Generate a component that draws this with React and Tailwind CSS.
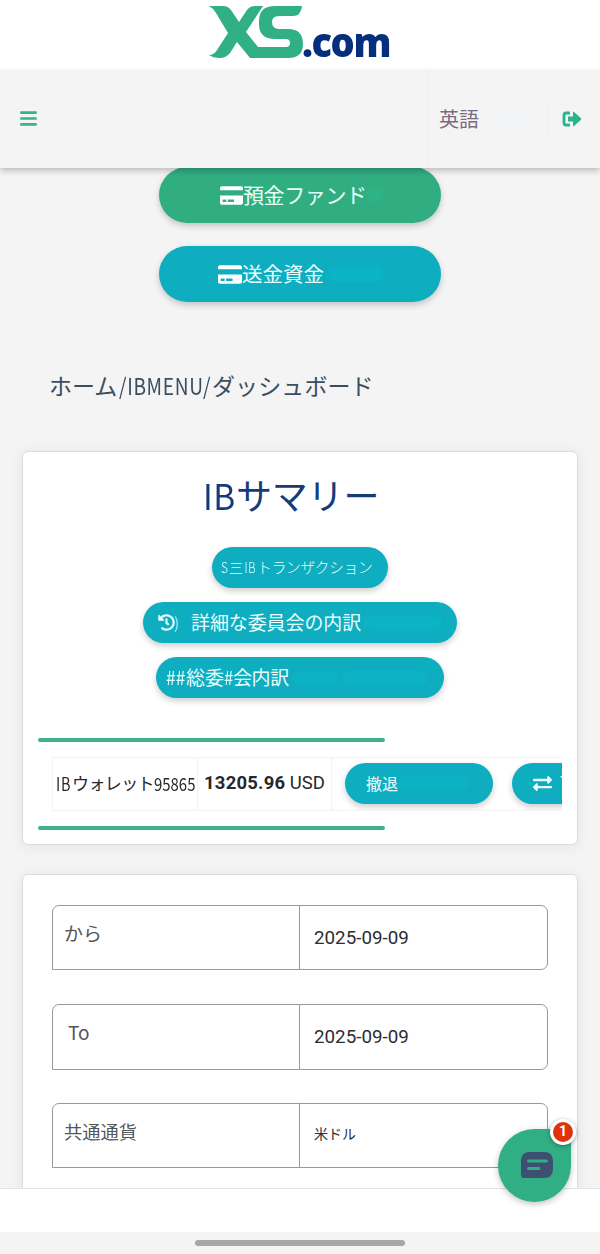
import React from "react";
import { FaBars, FaCreditCard, FaHistory, FaExchangeAlt } from "react-icons/fa";

const fields = [
  { label: "から", value: "2025-09-09", labelClass: "ml-[11px] -mt-[8px] text-[19px]", valueClass: "text-[18.800px] mt-[1px]", gap: "mb-[34px] h-[65px]" },
  { label: "To", value: "2025-09-09", labelClass: "ml-[15px] -mt-[10px] text-[19px]", valueClass: "text-[18.800px] mt-[1px]", gap: "mb-[33px] h-[66px]" },
  { label: "共通通貨", value: "米ドル", labelClass: "ml-[11px] -mt-[8px] text-[18.300px]", valueClass: "text-[14px] -mt-[3px]", gap: "h-[65px]" },
];

function Logo() {
  return (
    <div className="flex h-[70px] shrink-0 items-start justify-center bg-white">
      <div className="relative mt-[5px] h-[60px] w-[182px]">
        <svg className="h-[54px] w-[96px]" viewBox="0 0 96 54" fill="#30b084" aria-label="XS">
          <path d="M0 1H14Q19 1 22 5L30 17L38 5Q41 1 46 1H54L37 27L49 42H77Q81 42 81 38Q81 34 77 34H66Q50 34 50 19V16Q50 1 66 1H93Q92 11 84 11H70Q63 11 63 17Q63 24 70 24H79Q94 24 94 39Q94 53 79 53H41L28 37L21 48Q17 53 11 53Q4 53 0 50Q5 50 8 45L19 28L7 8Q4 3 0 1Z" />
        </svg>
        <span className="absolute left-[93px] top-[10px] origin-left scale-x-[0.95] whitespace-nowrap font-['Open_Sans',sans-serif] text-[40px] font-extrabold leading-[54px] tracking-[-1.500px] text-[#052f7c]">
          .com
        </span>
      </div>
    </div>
  );
}

function Navbar() {
  return (
    <header className="relative z-10 h-[98px] shrink-0 bg-[#f4f4f4] shadow-[0_3px_6px_rgba(0,0,0,0.22)]">
      <div className="flex h-full items-center pb-[1px]">
        <FaBars className="ml-[20px] h-[19px] w-[17px] text-[#35b58c]" />
        <div className="ml-auto flex h-full w-[173px] items-center border-l border-[#efefef]">
          <span className="ml-[11px] text-[20px] font-normal text-[#7c6a7e]">英語</span>
          <span className="ml-[14px] h-[14px] w-[38px] rounded bg-[#f1f5f8] blur-[2px]" />
          <span className="ml-[16px] h-[30px] w-px bg-[#efefef]" />
          <svg className="ml-[14px] h-[16px] w-[20px]" viewBox="0 0 20 16" fill="none">
            <path d="M8 2H4Q2 2 2 4V12Q2 14 4 14H8" stroke="#2ab48a" strokeWidth="2.800" />
            <path d="M6 5.500H11V1.500Q11 .4 12 1L19 7.300Q19.600 8 19 8.700L12 15Q11 15.600 11 14.500V10.500H6Z" fill="#2ab48a" />
          </svg>
        </div>
      </div>
    </header>
  );
}

function PillButton({ className, children }) {
  return (
    <button
      className={`relative flex shrink-0 items-center whitespace-nowrap rounded-full bg-[#0eadc0] text-[#e9ffff] shadow-[0_3px_6px_rgba(0,0,0,0.2)] ${className}`}
    >
      {children}
    </button>
  );
}

function Summary() {
  return (
    <section className="mx-[22px] mt-[50px] h-[394px] shrink-0 rounded-[6px] border border-[#d5dce2] bg-white shadow-[0_2px_14px_rgba(0,0,0,0.07)]">
      <h1 className="flex h-[95px] items-center pb-[12px] pl-[180px] leading-none text-[#163c78]">
        <span className="block w-[33px] origin-left scale-x-[0.93] whitespace-nowrap text-[36px] tracking-[0.500px]">IB</span>
        <span className="block text-[36px] tracking-[-0.200px]">サマリー</span>
      </h1>

      <div className="flex flex-col items-center gap-[14px]">
        <PillButton className="h-[41px] w-[176px] pl-[9px] font-light">
          <span className="block w-[8px] origin-left scale-x-[0.8] text-[15px]">S</span>
          <span className="text-[14px]">三</span>
          <span className="block w-[14px] origin-left scale-x-[0.75] pl-[2px] text-[15px] tracking-[1px]">IB</span>
          <span className="text-[15px] tracking-[-0.600px]">トランザクション</span>
        </PillButton>
        <PillButton className="h-[41px] w-[314px] pl-[15px]">
          <FaHistory className="h-[17px] w-[17px]" />
          <span className="-ml-[1px] -mt-[2px] w-[17px] text-left text-[16px] font-light leading-none">)</span>
          <span className="text-[19px] tracking-[-0.100px]">詳細な委員会の内訳</span>
          <span className="ml-[2px] h-[13px] w-[78px] rounded bg-[#0ab8c9] opacity-70 blur-[2px]" />
        </PillButton>
        <PillButton className="h-[41px] w-[288px] pl-[10px]">
          <span className="block w-[20px] origin-left scale-x-[0.92] text-[19px]">##</span>
          <span className="text-[19px]">総委</span>
          <span className="block w-[9px] origin-left scale-x-[0.88] text-[19px]">#</span>
          <span className="text-[19px] tracking-[-0.400px]">会内訳</span>
          <span className="ml-[3px] h-[12px] w-[46px] rounded bg-[#0ab8c9] opacity-60 blur-[2px]" />
          <span className="ml-[5px] h-[13px] w-[84px] rounded bg-[#0ab8c9] opacity-60 blur-[2px]" />
        </PillButton>
      </div>

      <div className="ml-[15px] mt-[40px] h-[4px] w-[347px] rounded-full bg-[#3eb18c]" />
      <div className="ml-[29px] mr-[15px] mt-[15px] flex h-[54px] items-center overflow-hidden border-y border-l border-[#f4f2f3] text-[#25282c]">
        <div className="flex h-full w-[145px] shrink-0 items-center whitespace-nowrap border-r border-[#f2f2f2] pb-[2px] pl-[3px]">
          <span className="block w-[16px] shrink-0 origin-left scale-x-[0.8] text-[18px] tracking-[1px]">IB</span>
          <span className="w-[82px] shrink-0 text-[17px] tracking-[-0.600px]">ウォレット</span>
          <span className="block w-[42px] shrink-0 origin-left scale-x-[0.83] text-[18px]">95865</span>
        </div>
        <div className="flex h-full w-[134px] shrink-0 items-center whitespace-pre border-r border-[#f2f2f2] pl-[6px] font-[Roboto,sans-serif] text-[18.500px]">
          <b className="tracking-[0.200px]">13205.96</b> USD
        </div>
        <PillButton className="-mt-[2px] ml-[13px] h-[41px] w-[148px] pl-[21px]">
          <span className="text-[16px]">撤退</span>
          <span className="ml-[3px] h-[14px] w-[68px] rounded bg-[#0ab8c9] opacity-50 blur-[2px]" />
        </PillButton>
        <PillButton className="-mt-[2px] ml-[19px] h-[41px] w-[130px] pl-[21px] font-[Roboto,sans-serif] text-[17px]">
          <FaExchangeAlt className="mr-[8px] h-[19px] w-[19px]" />
          Transfer
        </PillButton>
      </div>
      <div className="ml-[15px] mt-[15px] h-[4px] w-[347px] rounded-full bg-[#3eb18c]" />
    </section>
  );
}

function Filters() {
  return (
    <section className="mx-[22px] mt-[29px] h-[420px] shrink-0 rounded-[6px] border border-[#d5dce2] bg-white px-[29px] pt-[30px] shadow-[0_2px_14px_rgba(0,0,0,0.07)]">
      {fields.map((f) => (
        <div key={f.label} className={`flex ${f.gap}`}>
          <div className="flex w-[248px] items-center rounded-tl-[7px] border border-[#999] text-[#53565a]">
            <span className={f.labelClass}>{f.label}</span>
          </div>
          <div className="-ml-px flex flex-1 items-center rounded-r-[7px] border border-[#999] pl-[14px] font-[Roboto,'Noto_Sans_CJK_JP',sans-serif] text-[#2b2d30]">
            <span className={f.valueClass}>{f.value}</span>
          </div>
        </div>
      ))}
    </section>
  );
}

function ChatBubble() {
  return (
    <button className="absolute left-[498px] top-[1129px] z-20 flex h-[73px] w-[73px] items-center justify-center rounded-full rounded-tr-none bg-[#30ae84] shadow-[0_2px_6px_rgba(0,0,0,0.25)]">
      <svg className="ml-[4px] -mt-[1px] h-[26px] w-[32px]" viewBox="0 0 32 26">
        <path d="M9 0H23Q32 0 32 9V17Q32 26 23 26H3Q0 26 0 23V9Q0 0 9 0Z" fill="#3d5070" />
        <path d="M7.500 9H25.500M7.500 16.500H18" stroke="#30ae84" strokeWidth="3" strokeLinecap="round" />
      </svg>
      <span className="absolute -right-[5px] -top-[10px] flex h-[26px] w-[26px] items-center justify-center rounded-full border-[3px] border-white bg-[#de330c] pb-[3px] font-[Roboto,sans-serif] text-[14px] font-bold leading-none text-white shadow-[0_1px_4px_rgba(0,0,0,0.35)]">
        1
      </span>
    </button>
  );
}

export default function App() {
  return (
    <div className="relative flex h-[1254px] w-[600px] flex-col overflow-hidden bg-[#f4f4f4] font-['Noto_Sans_CJK_JP',sans-serif]">
      <Logo />
      <Navbar />

      <main className="flex h-[1020px] shrink-0 flex-col overflow-hidden">
        <button className="mx-auto -mt-px flex h-[56px] w-[282px] shrink-0 items-center rounded-full bg-[#30ae82] pl-[61px] text-[#e9fff6] shadow-[0_3px_6px_rgba(0,0,0,0.2)]">
          <FaCreditCard className="h-[21px] w-[23px] shrink-0 text-white" preserveAspectRatio="none" />
          <span className="-mt-[1px] whitespace-nowrap text-[21px] tracking-[-0.400px]">預金ファンド</span>
          <span className="h-[12px] w-[14px] rounded bg-[#2db98a] opacity-60 blur-[2px]" />
        </button>
        <PillButton className="mx-auto mt-[23px] h-[56px] w-[282px] pl-[59px]">
          <FaCreditCard className="h-[21px] w-[24px] shrink-0 text-white" preserveAspectRatio="none" />
          <span className="-mt-[1px] text-[20.500px]">送金資金</span>
          <span className="ml-[4px] h-[14px] w-[54px] rounded bg-[#0ab9cb] opacity-60 blur-[2px]" />
        </PillButton>

        <nav className="mt-[67px] flex h-[32px] shrink-0 items-center whitespace-nowrap pl-[49px] text-[#3c4d60]">
          <span className="w-[70px] shrink-0 text-[23px]">ホーム</span>
          <span className="block w-[93px] shrink-0 origin-left scale-x-[0.83] text-[23px] tracking-[0.800px]">/IBMENU/</span>
          <span className="text-[23px] tracking-[0.100px]">ダッシュボード</span>
        </nav>

        <Summary />
        <Filters />
      </main>

      <div className="z-10 h-[44px] shrink-0 border-t border-[#dfe3e6] bg-white" />
      <div className="flex h-[22px] shrink-0 justify-center bg-[#f4f4f4]">
        <div className="mt-[8px] h-[6px] w-[210px] rounded-full bg-[#a8a8a8]" />
      </div>

      <ChatBubble />
    </div>
  );
}
